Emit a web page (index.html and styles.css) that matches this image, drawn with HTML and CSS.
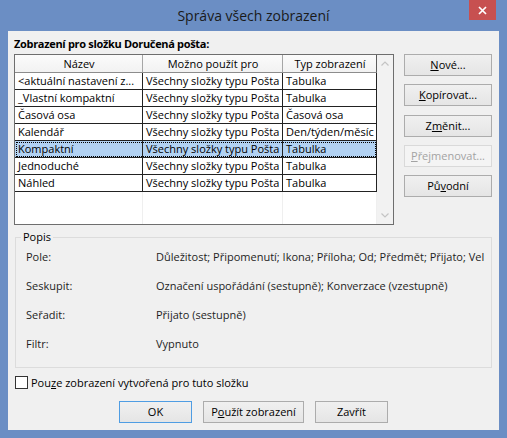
FILE: index.html
```html
<!DOCTYPE html>
<html lang="cs">
<head>
<meta charset="utf-8">
<title>Správa všech zobrazení</title>
<link rel="stylesheet" href="styles.css">
</head>
<body>
<div class="window">
  <div class="titlebar">
    <span></span>
    <div class="title">Správa všech zobrazení</div>
    <div class="close">
      <svg width="9" height="9" viewBox="0 0 9 9"><path d="M1 1L8 8M8 1L1 8" stroke="#fff" stroke-width="1.7" fill="none"/></svg>
    </div>
  </div>
  <div class="client">
    <div class="caption">Zobrazení pro složku Doručená pošta:</div>
    <div class="main">
      <div class="list">
        <div class="grid">
          <div class="row head">
            <div class="cell">Název</div>
            <div class="cell">Možno použít pro</div>
            <div class="cell">Typ zobrazení</div>
          </div>
          <div class="row">
            <div class="cell">&lt;aktuální nastavení z...</div>
            <div class="cell">Všechny složky typu Pošta</div>
            <div class="cell">Tabulka</div>
          </div>
          <div class="row">
            <div class="cell">_Vlastní kompaktní</div>
            <div class="cell">Všechny složky typu Pošta</div>
            <div class="cell">Tabulka</div>
          </div>
          <div class="row">
            <div class="cell">Časová osa</div>
            <div class="cell">Všechny složky typu Pošta</div>
            <div class="cell">Časová osa</div>
          </div>
          <div class="row">
            <div class="cell">Kalendář</div>
            <div class="cell">Všechny složky typu Pošta</div>
            <div class="cell">Den/týden/měsíc</div>
          </div>
          <div class="row sel">
            <div class="cell">Kompaktní</div>
            <div class="cell">Všechny složky typu Pošta</div>
            <div class="cell">Tabulka</div>
          </div>
          <div class="row">
            <div class="cell">Jednoduché</div>
            <div class="cell">Všechny složky typu Pošta</div>
            <div class="cell">Tabulka</div>
          </div>
          <div class="row">
            <div class="cell">Náhled</div>
            <div class="cell">Všechny složky typu Pošta</div>
            <div class="cell">Tabulka</div>
          </div>
          <div class="row fill">
            <div class="cell"></div>
            <div class="cell"></div>
            <div class="cell"></div>
          </div>
        </div>
        <div class="scroll">
          <div class="arrow"><svg width="8" height="5" viewBox="0 0 8 5"><path d="M0.5 4.5L4 1L7.5 4.5" stroke="#c4c4c4" stroke-width="1.2" fill="none"/></svg></div>
          <div class="arrow"><svg width="8" height="5" viewBox="0 0 8 5"><path d="M0.5 0.5L4 4L7.5 0.5" stroke="#c4c4c4" stroke-width="1.2" fill="none"/></svg></div>
        </div>
      </div>
      <div class="side">
        <button class="btn"><u>N</u>ové...</button>
        <button class="btn"><u>K</u>opírovat...</button>
        <button class="btn">Z<u>m</u>ěnit...</button>
        <button class="btn disabled"><u>P</u>řejmenovat...</button>
        <button class="btn">Pů<u>v</u>odní</button>
      </div>
    </div>
    <fieldset class="desc">
      <legend>Popis</legend>
      <div class="desc-row"><span>Pole:</span><span class="val">Důležitost; Připomenutí; Ikona; Příloha; Od; Předmět; Přijato; Vel</span></div>
      <div class="desc-row"><span>Seskupit:</span><span class="val">Označení uspořádání (sestupně); Konverzace (vzestupně)</span></div>
      <div class="desc-row"><span>Seřadit:</span><span class="val">Přijato (sestupně)</span></div>
      <div class="desc-row"><span>Filtr:</span><span class="val">Vypnuto</span></div>
    </fieldset>
    <label class="check"><span class="box"></span><span>Pou<u>z</u>e zobrazení vytvořená pro tuto složku</span></label>
    <div class="footer">
      <button class="btn default">OK</button>
      <button class="btn wide">P<u>o</u>užít zobrazení</button>
      <button class="btn">Zavřít</button>
    </div>
  </div>
</div>
</body>
</html>
```
FILE: styles.css
```css
html, body {
  margin: 0;
  padding: 0;
}
body {
  width: 507px;
  height: 438px;
  overflow: hidden;
  background: #6b8ec4;
  font-family: "Open Sans", "Noto Sans", sans-serif;
  font-size: 11px;
  color: #000;
}
.window {
  display: flex;
  flex-direction: column;
  height: 438px;
}
.titlebar {
  height: 31px;
  display: grid;
  grid-template-columns: 1fr auto 1fr;
}
.title {
  font-size: 14px;
  line-height: 31px;
  color: #1a1a1a;
}
.close {
  justify-self: end;
  align-self: start;
  margin-right: 11px;
  width: 27px;
  height: 20px;
  background: #c75050;
  display: flex;
  align-items: center;
  justify-content: center;
}
.client {
  margin: 0 8px;
  height: 399px;
  box-sizing: border-box;
  background: #f0f0f0;
  padding: 5px 6px 0 6px;
}
.caption {
  font-weight: 700;
  line-height: 16px;
  letter-spacing: -0.32px;
  margin-bottom: 2px;
}
.main {
  display: flex;
  align-items: flex-start;
  gap: 10px;
}
.list {
  width: 380px;
  height: 171px;
  box-sizing: border-box;
  border: 1px solid #6e6e6e;
  background: #fff;
  display: flex;
}
.grid {
  width: 362px;
  display: flex;
  flex-direction: column;
}
.row {
  display: grid;
  grid-template-columns: 128px 140px 94px;
  height: 17px;
  flex: none;
}
.cell {
  box-sizing: border-box;
  border-right: 1px solid #222;
  border-bottom: 1px solid #222;
  padding: 0 2px 0 3px;
  line-height: 16px;
  white-space: nowrap;
  overflow: hidden;
}
.row.head {
  height: 18px;
}
.row.head .cell {
  background: linear-gradient(#fbfbfb, #f2f2f2);
  border-right-color: #a6a6a6;
  border-bottom-color: #8c8c8c;
  text-align: center;
  line-height: 17px;
}
.row.head .cell:last-child {
  border-right-color: #5c5c5c;
}
.row.sel {
  background: #b2d2f3;
  outline: 1px dotted #000;
  outline-offset: -2px;
}
.row.fill {
  flex: 1;
  height: auto;
}
.row.fill .cell {
  border-bottom: none;
  border-right-color: #efefef;
}
.scroll {
  width: 16px;
  background: #f2f2f2;
  display: flex;
  flex-direction: column;
  justify-content: space-between;
}
.arrow {
  height: 17px;
  display: flex;
  align-items: center;
  justify-content: center;
}
.side {
  display: flex;
  flex-direction: column;
  gap: 8.3px;
  width: 88px;
}
.btn {
  box-sizing: border-box;
  height: 22px;
  width: 88px;
  margin: 0;
  padding: 0;
  border: 1px solid #acacac;
  border-radius: 0;
  background: linear-gradient(#f0f0f0, #e5e5e5);
  font-family: inherit;
  font-size: 11px;
  line-height: 20px;
  color: #000;
  text-align: center;
}
.btn.disabled {
  border-color: #d9d9d9;
  background: #f4f4f4;
  color: #a3a3a3;
}
.desc {
  margin: 4px 1px 0 1px;
  padding: 4px 7px 15px 0;
  border: 1px solid #dcdcdc;
  min-width: 0;
  display: flex;
  flex-direction: column;
  gap: 13px;
}
.desc legend {
  margin-left: 5px;
  padding: 0 2px;
  line-height: 16px;
}
.desc-row {
  display: grid;
  grid-template-columns: 130px 1fr;
  padding-left: 10px;
  line-height: 16px;
  color: #1e1e1e;
}
.val {
  white-space: nowrap;
}
.check {
  display: flex;
  align-items: center;
  gap: 3px;
  height: 16px;
  margin: 6px 0 0 1px;
}
.box {
  width: 13px;
  height: 13px;
  box-sizing: border-box;
  border: 1px solid #333;
  background: #fff;
}
.footer {
  display: flex;
  justify-content: center;
  gap: 11px;
  margin-top: 11px;
}
.footer .btn {
  width: 73px;
}
.footer .btn.wide {
  width: 101px;
}
.btn.default {
  border-color: #4f9de3;
}
```
